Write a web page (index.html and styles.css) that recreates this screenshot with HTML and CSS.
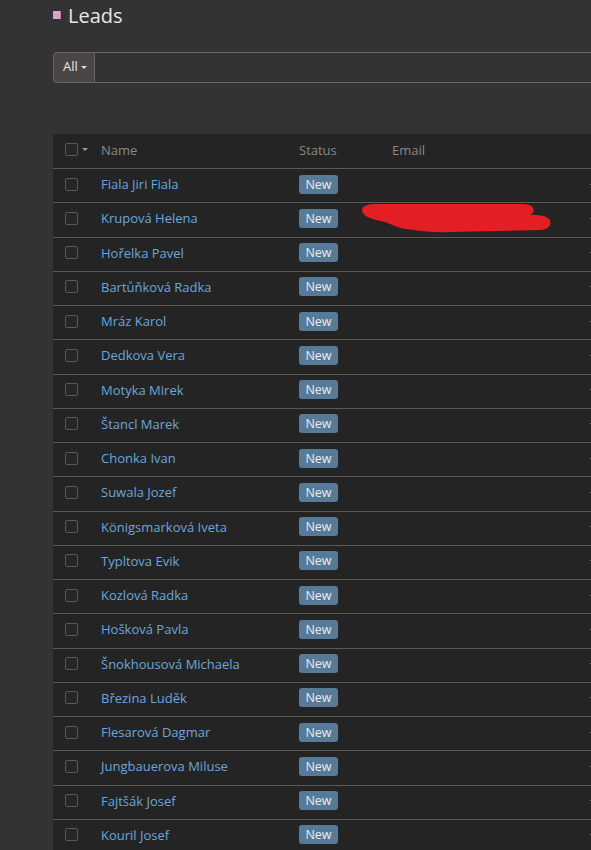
FILE: index.html
```html
<!DOCTYPE html>
<html>
<head>
<meta charset="utf-8">
<link rel="stylesheet" href="styles.css">
</head>
<body>
<div class="page">
  <h1 class="title"><span class="title-mark"></span>Leads</h1>
  <div class="search">
    <div class="filter-btn">All <span class="caret"></span></div>
    <div class="search-input"></div>
  </div>
  <div class="list">
    <div class="row head">
      <div class="c-check"><span class="cb"></span><span class="caret small"></span></div>
      <div class="c-name">Name</div>
      <div class="c-status">Status</div>
      <div class="c-email">Email</div>
      <div class="c-more"></div>
    </div>
    <div class="row"><div class="c-check"><span class="cb"></span></div><div class="c-name"><a>Fiala Jiri Fiala</a></div><div class="c-status"><span class="badge">New</span></div><div class="c-email"></div><div class="c-more"><span class="dot"></span></div></div>
    <div class="row redacted"><div class="c-check"><span class="cb"></span></div><div class="c-name"><a>Krupová Helena</a></div><div class="c-status"><span class="badge">New</span></div><div class="c-email"></div><div class="c-more"><span class="dot"></span></div>
      <svg class="scribble" width="200" height="32" viewBox="360 201 200 32"><path d="M362,209 C362,204 370,202.5 380,203 L524,203 C535,203 536,212 530,213.5 L541,214.5 C554,216 554,228 540,229 L450,231 C428,232 414,229 400,227 L385,221 C368,218 362,214 362,209 Z" fill="#e31e24"/></svg>
    </div>
    <div class="row"><div class="c-check"><span class="cb"></span></div><div class="c-name"><a>Hořelka Pavel</a></div><div class="c-status"><span class="badge">New</span></div><div class="c-email"></div><div class="c-more"><span class="dot"></span></div></div>
    <div class="row"><div class="c-check"><span class="cb"></span></div><div class="c-name"><a>Bartůňková Radka</a></div><div class="c-status"><span class="badge">New</span></div><div class="c-email"></div><div class="c-more"><span class="dot"></span></div></div>
    <div class="row"><div class="c-check"><span class="cb"></span></div><div class="c-name"><a>Mráz Karol</a></div><div class="c-status"><span class="badge">New</span></div><div class="c-email"></div><div class="c-more"><span class="dot"></span></div></div>
    <div class="row"><div class="c-check"><span class="cb"></span></div><div class="c-name"><a>Dedkova Vera</a></div><div class="c-status"><span class="badge">New</span></div><div class="c-email"></div><div class="c-more"><span class="dot"></span></div></div>
    <div class="row"><div class="c-check"><span class="cb"></span></div><div class="c-name"><a>Motyka Mirek</a></div><div class="c-status"><span class="badge">New</span></div><div class="c-email"></div><div class="c-more"><span class="dot"></span></div></div>
    <div class="row"><div class="c-check"><span class="cb"></span></div><div class="c-name"><a>Štancl Marek</a></div><div class="c-status"><span class="badge">New</span></div><div class="c-email"></div><div class="c-more"><span class="dot"></span></div></div>
    <div class="row"><div class="c-check"><span class="cb"></span></div><div class="c-name"><a>Chonka Ivan</a></div><div class="c-status"><span class="badge">New</span></div><div class="c-email"></div><div class="c-more"><span class="dot"></span></div></div>
    <div class="row"><div class="c-check"><span class="cb"></span></div><div class="c-name"><a>Suwala Jozef</a></div><div class="c-status"><span class="badge">New</span></div><div class="c-email"></div><div class="c-more"><span class="dot"></span></div></div>
    <div class="row"><div class="c-check"><span class="cb"></span></div><div class="c-name"><a>Königsmarková Iveta</a></div><div class="c-status"><span class="badge">New</span></div><div class="c-email"></div><div class="c-more"><span class="dot"></span></div></div>
    <div class="row"><div class="c-check"><span class="cb"></span></div><div class="c-name"><a>Typltova Evik</a></div><div class="c-status"><span class="badge">New</span></div><div class="c-email"></div><div class="c-more"><span class="dot"></span></div></div>
    <div class="row"><div class="c-check"><span class="cb"></span></div><div class="c-name"><a>Kozlová Radka</a></div><div class="c-status"><span class="badge">New</span></div><div class="c-email"></div><div class="c-more"><span class="dot"></span></div></div>
    <div class="row"><div class="c-check"><span class="cb"></span></div><div class="c-name"><a>Hošková Pavla</a></div><div class="c-status"><span class="badge">New</span></div><div class="c-email"></div><div class="c-more"><span class="dot"></span></div></div>
    <div class="row"><div class="c-check"><span class="cb"></span></div><div class="c-name"><a>Šnokhousová Michaela</a></div><div class="c-status"><span class="badge">New</span></div><div class="c-email"></div><div class="c-more"><span class="dot"></span></div></div>
    <div class="row"><div class="c-check"><span class="cb"></span></div><div class="c-name"><a>Březina Luděk</a></div><div class="c-status"><span class="badge">New</span></div><div class="c-email"></div><div class="c-more"><span class="dot"></span></div></div>
    <div class="row"><div class="c-check"><span class="cb"></span></div><div class="c-name"><a>Flesarová Dagmar</a></div><div class="c-status"><span class="badge">New</span></div><div class="c-email"></div><div class="c-more"><span class="dot"></span></div></div>
    <div class="row"><div class="c-check"><span class="cb"></span></div><div class="c-name"><a>Jungbauerova Miluse</a></div><div class="c-status"><span class="badge">New</span></div><div class="c-email"></div><div class="c-more"><span class="dot"></span></div></div>
    <div class="row"><div class="c-check"><span class="cb"></span></div><div class="c-name"><a>Fajtšák Josef</a></div><div class="c-status"><span class="badge">New</span></div><div class="c-email"></div><div class="c-more"><span class="dot"></span></div></div>
    <div class="row"><div class="c-check"><span class="cb"></span></div><div class="c-name"><a>Kouril Josef</a></div><div class="c-status"><span class="badge">New</span></div><div class="c-email"></div><div class="c-more"><span class="dot"></span></div></div>
  </div>
</div>
</body>
</html>
```
FILE: styles.css
```css
html, body {
  margin: 0;
  padding: 0;
  background: #333333;
  overflow: hidden;
}
body {
  font-family: "Open Sans", "Noto Sans", "Liberation Sans", sans-serif;
  font-size: 13px;
  color: #d0d0d0;
  width: 591px;
  height: 850px;
}
.page {
  padding-left: 53px;
  width: 700px;
}
.title {
  margin: 0;
  padding-top: 1px;
  height: 33px;
  box-sizing: border-box;
  display: flex;
  align-items: center;
  gap: 7px;
  font-size: 20px;
  font-weight: 400;
  color: #e6e6e6;
  line-height: 27px;
  padding-bottom: 4px;
}
.title-mark {
  width: 8px;
  height: 8px;
  background: #d9a3d2;
  border-right: 1px solid #c07a90;
  box-sizing: border-box;
  margin-top: 0;
}
.search {
  margin-top: 19px;
  display: flex;
  height: 31px;
}
.filter-btn {
  width: 42px;
  box-sizing: border-box;
  background: #4a4645;
  border: 1px solid #6a6565;
  border-radius: 4px 0 0 4px;
  color: #e8e8e8;
  font-size: 13px;
  display: flex;
  align-items: center;
  padding-left: 9px;
  padding-bottom: 3px;
  gap: 3px;
}
.caret {
  display: inline-block;
  width: 0;
  height: 0;
  border-left: 3px solid transparent;
  border-right: 3px solid transparent;
  border-top: 3px solid #d8d8d8;
  margin-top: 3px;
}
.caret.small {
  border-top-color: #9a9a9a;
  margin-left: 4px;
  margin-top: 0;
}
.search-input {
  flex: 1;
  border-top: 1px solid #6a6565;
  border-bottom: 1px solid #6a6565;
  background: #333333;
}
.list {
  margin-top: 51px;
  background: #242424;
}
.row {
  display: grid;
  grid-template-columns: 48px 198px 93px 197px 60px;
  align-items: center;
  height: 34.26px;
  box-sizing: border-box;
  border-bottom: 1px solid #5d5858;
  position: relative;
  padding-bottom: 3px;
}
.row.head {
  height: 35px;
  color: #888888;
}
.c-check {
  padding-left: 12px;
  display: flex;
  align-items: center;
}
.cb {
  width: 13px;
  height: 13px;
  box-sizing: border-box;
  border: 1px solid #5a5858;
  border-radius: 2px;
  background: #262626;
}
.c-name a {
  color: #6aa7dd;
  text-decoration: none;
}
.badge {
  display: inline-block;
  background: #587a99;
  color: #ececec;
  border-radius: 3px;
  width: 39px;
  height: 19px;
  line-height: 19px;
  text-align: center;
  font-size: 12.5px;
}
.c-more {
  padding-left: 1px;
}
.dot {
  display: block;
  width: 2px;
  height: 1px;
  background: #3b84c8;
}
.scribble {
  position: absolute;
  left: 307px;
  top: -1px;
}
```
